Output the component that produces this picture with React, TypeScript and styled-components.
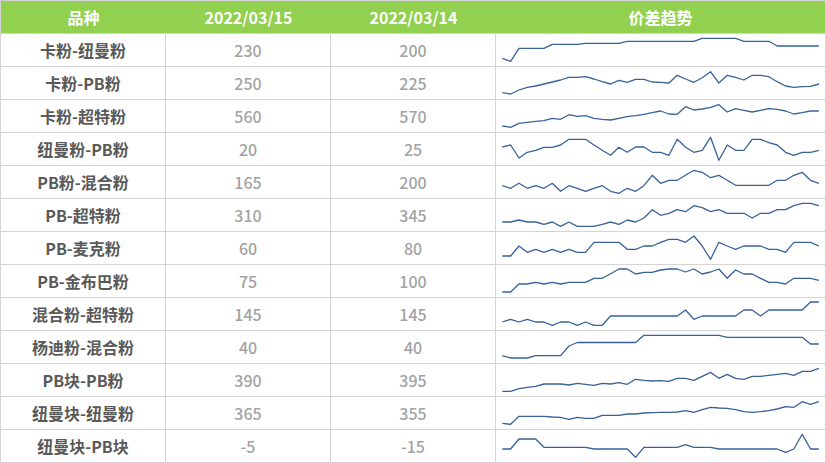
import React from "react";
import styled, { createGlobalStyle } from "styled-components";

// spread table: 品种 / two dates / sparkline of the spread
const GlobalStyle = createGlobalStyle`
  html, body {
    margin: 0;
    padding: 0;
    background: #ffffff;
  }
  body {
    font-family: "Noto Sans CJK SC", "Noto Sans", sans-serif;
  }
`;

type Row = { name: string; a: string; b: string; pts: number[] };

const rows: Row[] = [
  {
    name: "卡粉-纽曼粉", a: "230", b: "200",
    pts: [25.3, 28.3, 15.3, 15.3, 15.3, 15.3, 11.3, 11.3, 11.3, 11.3, 10.3, 10.3, 10.3, 10.3, 10.3, 8.3, 8.3, 8.3, 8.3, 8.3, 8.3, 8.3, 8.3, 8.3, 5.3, 5.3, 5.3, 5.3, 5.3, 8.3, 8.3, 8.3, 8.3, 13, 13, 13, 13, 13, 13],
  },
  {
    name: "卡粉-PB粉", a: "250", b: "225",
    pts: [26.7, 28, 24, 21.3, 20, 18, 16, 14, 11.3, 11.3, 10.7, 13, 15.7, 18, 14.3, 16.3, 13.3, 13.3, 16, 16.3, 17, 9.3, 13, 16.3, 11.7, 5.7, 17, 9.3, 11.3, 14, 9.3, 9.3, 10.7, 15.7, 20, 21.3, 20.7, 20.3, 18],
  },
  {
    name: "卡粉-超特粉", a: "560", b: "570",
    pts: [27, 28.3, 24.3, 23.3, 22.3, 21.7, 19.3, 20.3, 15.7, 17.3, 16.7, 19.3, 20.3, 21, 19.3, 17.7, 16.7, 15.3, 13.7, 12, 15, 15.3, 7.7, 11, 10, 8.3, 5.7, 13, 9.7, 11.3, 13, 11.3, 9.7, 10.3, 12, 15, 13.7, 12, 12],
  },
  {
    name: "纽曼粉-PB粉", a: "20", b: "25",
    pts: [15, 13, 26, 20.3, 18.3, 15.3, 15.3, 13, 7.3, 7.3, 7.3, 13, 18.3, 23.3, 15.3, 20.3, 15, 15, 20.3, 20.3, 23.3, 7.3, 15.3, 20.3, 18.3, 5.3, 28.3, 13, 18.3, 18.3, 7.3, 7.3, 10.7, 13, 20.3, 23.3, 20.3, 20.3, 18.3],
  },
  {
    name: "PB粉-混合粉", a: "165", b: "200",
    pts: [20.7, 23.3, 18.3, 23.3, 20.7, 23.3, 18.3, 26.3, 20.7, 23.3, 26.3, 23.3, 20.7, 26.3, 28.3, 23.3, 26.3, 20.7, 10.3, 18.3, 15.3, 15.3, 10.3, 5.3, 7.3, 12.7, 10.3, 15.3, 20.3, 20.3, 20.3, 20.3, 20.3, 15.3, 15.3, 10.3, 7.3, 15.3, 18.3],
  },
  {
    name: "PB-超特粉", a: "310", b: "345",
    pts: [24, 24, 22, 24, 24, 26.3, 24, 28.3, 24, 28.3, 28.3, 28.3, 26.3, 24, 26.3, 22, 24, 20, 11.7, 17.3, 15.3, 11.7, 13.7, 7.7, 9.7, 13.7, 11.7, 15.3, 15.3, 15.3, 20, 15.3, 15.3, 11.7, 11.7, 7.7, 5.3, 5.3, 7.7],
  },
  {
    name: "PB-麦克粉", a: "60", b: "80",
    pts: [25, 25, 15, 21.3, 18.3, 21.3, 18.3, 21.3, 18.3, 21.3, 21.3, 11.3, 11.3, 11.3, 11.3, 18.3, 18.3, 15, 15, 11.3, 8.3, 8.3, 11.3, 5, 15, 28.3, 11.3, 15, 18.3, 15, 15, 15, 18.3, 18.3, 21.3, 11.3, 11.3, 11.3, 15],
  },
  {
    name: "PB-金布巴粉", a: "75", b: "100",
    pts: [28, 28, 20, 20, 18.3, 20, 18.3, 20, 18.3, 18.3, 18.3, 14.3, 14.3, 9.7, 5, 5, 10, 8.3, 8.3, 6, 5, 5, 8, 5, 10, 8, 5, 14.3, 6, 10, 10, 14.3, 18.3, 18.3, 20, 14.3, 14.3, 14.3, 16.3],
  },
  {
    name: "混合粉-超特粉", a: "145", b: "145",
    pts: [25, 22.3, 25, 22.3, 25, 25, 28.3, 25, 25, 28.3, 25, 28.3, 28.3, 19, 19, 19, 19, 19, 19, 19, 19, 19, 13, 22.3, 19, 19, 19, 19, 19, 13, 13, 19, 13, 13, 13, 13, 13, 5, 5],
  },
  {
    name: "杨迪粉-混合粉", a: "40", b: "40",
    pts: [25.7, 28, 28, 28, 25.7, 25.7, 25.7, 25.7, 16, 12.5, 12.5, 12.5, 12.5, 12.5, 12.5, 12.5, 12.5, 5.3, 5.3, 5.3, 5.3, 5.3, 5.3, 5.3, 5.3, 5.3, 5.3, 7.3, 7.3, 7.3, 7.3, 7.3, 7.3, 7.3, 7.3, 7.3, 7.3, 14, 14],
  },
  {
    name: "PB块-PB粉", a: "390", b: "395",
    pts: [28.3, 28.3, 25.7, 24.3, 23.3, 21, 21, 21, 22, 20.3, 21.3, 22.3, 20.3, 21, 19.7, 21.3, 16.3, 17.3, 18, 17.7, 18.3, 15.3, 15.3, 17.3, 13.3, 9.3, 15.3, 11.3, 15.3, 16.3, 13.3, 13.3, 12.3, 11.3, 10.3, 12.3, 8.3, 8.3, 5.3],
  },
  {
    name: "纽曼块-纽曼粉", a: "365", b: "355",
    pts: [27.3, 28.3, 20.3, 20.3, 20.3, 20.3, 21, 21.3, 23.3, 21.3, 22.3, 22.3, 19.3, 19.3, 19.3, 18, 18, 17, 16.7, 16.3, 16.3, 16, 14.7, 16.3, 13.7, 11.3, 12, 12.3, 13.7, 15.7, 16.3, 15.7, 14.7, 13, 10.7, 11.3, 5.7, 8.3, 5.7],
  },
  {
    name: "纽曼块-PB块", a: "-5", b: "-15",
    pts: [20, 20, 10, 10, 10, 18.3, 18.3, 18.3, 18.3, 18.3, 18.3, 20, 20, 20, 20, 20, 28.3, 18.3, 18.3, 18.3, 18.3, 18.3, 15.7, 18.3, 18.3, 18.3, 20, 20, 20, 20, 20, 20, 20, 20, 23.3, 20, 5.3, 20, 20],
  },
];

function App() {
  return (
    <>
      <GlobalStyle />
      <Table>
        <HeadRow>
          <HeadCell>品种</HeadCell>
          <HeadCell>2022/03/15</HeadCell>
          <HeadCell>2022/03/14</HeadCell>
          <HeadCell>价差趋势</HeadCell>
        </HeadRow>
        {rows.map((r) => (
          <React.Fragment key={r.name}>
            <NameCell>{r.name}</NameCell>
            <NumCell>{r.a}</NumCell>
            <NumCell>{r.b}</NumCell>
            <ChartCell>
              <Spark pts={r.pts} />
            </ChartCell>
          </React.Fragment>
        ))}
      </Table>
    </>
  );
}

function Spark({ pts }: { pts: number[] }) {
  // 39 samples, evenly spread across the cell
  const d = pts
    .map((y, i) => `${(6.3 + i * 8.33).toFixed(2)},${(y - 1).toFixed(2)}`)
    .join(" ");
  return (
    <svg width="329" height="32" viewBox="0 0 329 32">
      <polyline
        points={d}
        fill="none"
        stroke="#37629a"
        strokeWidth="1.3"
        strokeLinejoin="round"
      />
    </svg>
  );
}

const Table = styled.div`
  display: grid;
  grid-template-columns: 164px 164px 164px 329px;
  grid-auto-rows: 32px;
  gap: 1px;
  padding: 1px;
  width: 826px;
  box-sizing: border-box;
  background: #d4d4d4;
`;

const HeadRow = styled.div`
  grid-column: 1 / -1;
  display: grid;
  grid-template-columns: 165px 165px 165px 329px;
  background: #92d050;
`;

const HeadCell = styled.div`
  display: flex;
  align-items: center;
  justify-content: center;
  color: #ffffff;
  font-size: 16px;
  font-weight: 700;
`;

const Cell = styled.div`
  background: #ffffff;
  display: flex;
  align-items: center;
  justify-content: center;
  font-size: 16px;
`;

const NameCell = styled(Cell)`
  color: #595959;
  font-weight: 700;
`;

const NumCell = styled(Cell)`
  color: #a3a3a3;
  font-weight: 500;
`;

const ChartCell = styled(Cell)`
  justify-content: flex-start;
  align-items: flex-start;
  svg {
    display: block;
  }
`;

export default App;
